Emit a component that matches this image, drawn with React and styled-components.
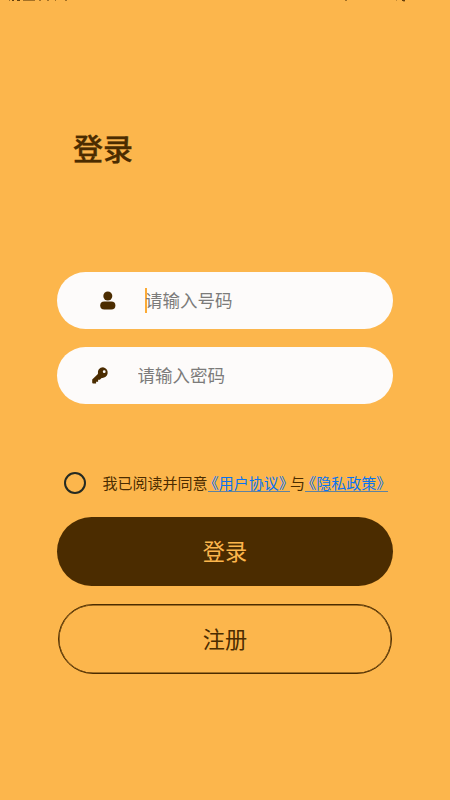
import React from "react";
import styled, { createGlobalStyle } from "styled-components";

const brown = "#4b2c00";
const amber = "#fcb64c";

const GlobalStyle = createGlobalStyle`
  * { box-sizing: border-box; }
  body {
    margin: 0;
    background: ${amber};
    font-family: "Noto Sans CJK SC", "Noto Sans", sans-serif;
  }
  button, input { font-family: inherit; margin: 0; }
`;

const Screen = styled.main`
  width: 450px;
  height: 800px;
  overflow: hidden;
  display: flex;
  flex-direction: column;
  background: ${amber};
  color: ${brown};
`;

const StatusBar = styled.header`
  height: 4px;
  flex: none;
  svg { display: block; }
`;

const Title = styled.h1`
  margin: 121px 0 0 73px;
  height: 44px;
  font-size: 30px;
  line-height: 44px;
  font-weight: 500;
  -webkit-text-stroke: 0.3px ${brown};
`;

const Form = styled.form`
  margin: 103px 57px 0;
  width: 336px;
  display: flex;
  flex-direction: column;
`;

const Field = styled.label`
  display: flex;
  align-items: center;
  height: 57px;
  margin-bottom: 18px;
  padding-left: ${(p) => p.$inset}px;
  border-radius: 29px;
  background: #fdfbfa;
  svg { flex: none; display: block; }
`;

const Caret = styled.span`
  width: 2px;
  height: 25px;
  margin-left: 29px;
  background: #fcab35;
`;

const Input = styled.input`
  width: 200px;
  height: 30px;
  margin-left: ${(p) => p.$gap}px;
  padding: 0 0 2px;
  border: 0;
  outline: 0;
  background: transparent;
  font-size: 17.5px;
  color: ${brown};
  &::placeholder { color: #7c7b7a; opacity: 1; }
`;

const Agreement = styled.div`
  display: flex;
  align-items: center;
  height: 30px;
  margin: 46px 0 19px 7px;
  font-size: 15px;
  line-height: 20px;
  white-space: nowrap;
`;

const Radio = styled.span`
  width: 22px;
  height: 22px;
  margin-right: 16.5px;
  border: 2px solid #252a22;
  border-radius: 50%;
`;

const Policy = styled.a`
  display: flex;
  justify-content: center;
  width: 82.5px;
  height: 18px;
  line-height: 18px;
  border-bottom: 1px solid #5f82a0;
  color: #0873f2;
  font-feature-settings: "halt";
`;

const Button = styled.button`
  width: ${(p) => (p.$outline ? 334 : 336)}px;
  height: ${(p) => (p.$outline ? 70 : 69)}px;
  align-self: center;
  margin-bottom: 18px;
  padding: 0 0 ${(p) => (p.$outline ? 2 : 3)}px;
  border: ${(p) => (p.$outline ? `1px solid ${brown}` : "0")};
  box-shadow: ${(p) => (p.$outline ? `inset 0 0 0 0.5px ${brown}` : "none")};
  border-radius: 35px;
  background: ${(p) => (p.$outline ? "transparent" : brown)};
  color: ${(p) => (p.$outline ? brown : amber)};
  font-size: 22.2px;
  line-height: 32px;
`;

const StatusMarks = () => (
  <svg width="450" height="4" viewBox="0 0 450 4" fill={brown}>
    <path opacity="0.85" d="M12 0h2v1h-2zM17 0h3v1h-3zM402 0h3v1h-3z" />
    <path opacity="0.5" d="M9 0h1v1H9zM23 0h12v1H23zM39 0h2v1h-2zM47 0h2v1h-2zM55 0h1v1h-1zM65 0h2v1h-2zM345 0h2v1h-2z" />
    <path opacity="0.3" d="M403 1h2v1h-2zM396 0h1v1h-1z" />
  </svg>
);

const UserIcon = () => (
  <svg width="16" height="19" viewBox="0 0 16 19" fill={brown}>
    <circle cx="7.8" cy="5" r="4.5" />
    <rect x="0.2" y="10.4" width="15.2" height="8.2" rx="4.1" />
  </svg>
);

const KeyIcon = () => (
  <svg width="17" height="17" viewBox="0 0 17 17">
    <path
      fill={brown}
      fillRule="evenodd"
      d="M11 .3a5.3 5.3 0 0 0-5.1 6.6L.2 12.5v3.1q0 .9.9.9h3v-1.7h2v-2h1.7l1.9-1.9A5.3 5.3 0 1 0 11 .3Zm1.2 3a1.4 1.4 0 1 1 0 2.8 1.4 1.4 0 0 1 0-2.8Z"
    />
  </svg>
);

export default function App() {
  return (
    <>
      <GlobalStyle />
      <Screen>
        <StatusBar><StatusMarks /></StatusBar>
        <Title>登录</Title>
        <Form>
          <Field $inset={43}>
            <UserIcon />
            <Caret />
            <Input $gap={-2} placeholder="请输入号码" />
          </Field>
          <Field $inset={35}>
            <KeyIcon />
            <Input $gap={28.5} type="password" placeholder="请输入密码" />
          </Field>
          <Agreement>
            <Radio />
            <span>我已阅读并同意</span>
            <Policy>《用户协议》</Policy>
            <span>与</span>
            <Policy>《隐私政策》</Policy>
          </Agreement>
          <Button type="button">登录</Button>
          <Button type="button" $outline>注册</Button>
        </Form>
      </Screen>
    </>
  );
}
